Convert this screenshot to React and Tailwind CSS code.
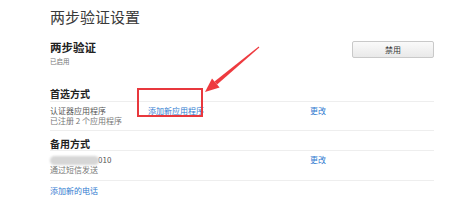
export default function App() {
  const font = { fontFamily: '"Noto Sans CJK SC", "Noto Sans", sans-serif' };
  return (
    <div className="relative w-[454px] h-[200px] bg-white overflow-hidden text-[#333]" style={font}>
      <div className="pl-[50px] pr-[20px] pt-[8px]">
        <h1 className="text-[15px] leading-[18px] font-normal text-[#3a3a3a]">两步验证设置</h1>
        <div className="mt-[14px] flex justify-between">
          <div>
            <div className="text-[11.5px] leading-[14px] font-bold text-[#222]">两步验证</div>
            <div className="mt-[2px] text-[6.5px] leading-[10px] text-[#777]">已启用</div>
          </div>
          <button className="mt-[1px] w-[82px] h-[17px] rounded-[2px] border border-[#c9c9c9] bg-gradient-to-b from-[#fafafa] to-[#e9e9e9] text-[8px] leading-[15px] text-[#333]">
            禁用
          </button>
        </div>
        <div className="mt-[22px] pb-[1px] border-b border-[#eeeeee] text-[10px] leading-[12px] font-bold text-[#222]">首选方式</div>
        <div className="grid grid-cols-[98px_162px_1fr] pt-[4px] pb-[4px] border-b border-[#eeeeee] text-[8px] leading-[10px]">
          <div>
            <div className="text-[#555]">认证器应用程序</div>
            <div className="text-[#777]">已注册 2 个应用程序</div>
          </div>
          <div className="text-[#2f7bd0]">添加新应用程序</div>
          <div className="text-[#2f7bd0]">更改</div>
        </div>
        <div className="pt-[7px] border-b border-[#eeeeee] text-[10px] leading-[12px] font-bold text-[#222]">备用方式</div>
        <div className="grid grid-cols-[260px_1fr] pt-[4px] pb-[5px] border-b border-[#eeeeee] text-[8px] leading-[10px]">
          <div>
            <div className="flex items-center text-[#555]">
              <span className="inline-block w-[49px] h-[9px] rounded-full bg-[#d6d6d6] blur-[1px]"></span>
              <span className="-ml-[1px]">010</span>
            </div>
            <div className="text-[#777]">通过短信发送</div>
          </div>
          <div className="text-[#2f7bd0]">更改</div>
        </div>
        <div className="pt-[5px] text-[8px] leading-[10px] text-[#2f7bd0]">添加新的电话</div>
      </div>
      <div className="absolute left-[137px] top-[88px] w-[66px] h-[29px] border-2 border-[#e8383d]"></div>
      <svg className="absolute inset-0" width="454" height="200" viewBox="0 0 454 200">
        <polygon points="258.7,46.6 259.3,47.4 217.1,84.5 214.5,81.5" fill="#ee3a3f" />
        <polygon points="205,92 212,78.4 219.6,87.6" fill="#ee3a3f" />
      </svg>
    </div>
  );
}
